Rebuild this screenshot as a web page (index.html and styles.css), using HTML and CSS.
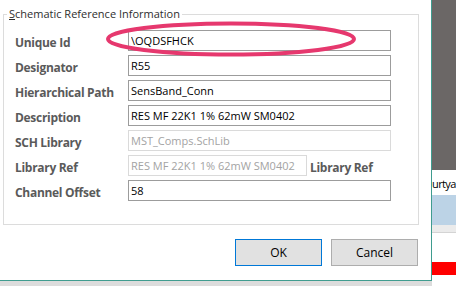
FILE: index.html
```html
<!DOCTYPE html>
<html lang="en">
<head>
  <meta charset="UTF-8">
  <title>Component Properties</title>
  <link rel="stylesheet" href="styles.css">
</head>
<body>

  <div class="screen">
    <div class="left">
      <div class="dialog">
        <div class="group">
          <span class="group-title"><u>S</u>chematic Reference Information</span>

          <div class="row">
            <label>Unique Id</label>
            <input type="text" class="field" value="\OQDSFHCK" readonly>
          </div>
          <div class="row">
            <label>Designator</label>
            <input type="text" class="field" value="R55" readonly>
          </div>
          <div class="row">
            <label>Hierarchical Path</label>
            <input type="text" class="field" value="SensBand_Conn" readonly>
          </div>
          <div class="row">
            <label>Description</label>
            <input type="text" class="field" value="RES MF 22K1 1% 62mW SM0402" readonly>
          </div>
          <div class="row">
            <label>SCH Library</label>
            <input type="text" class="field off" value="MST_Comps.SchLib" readonly>
          </div>
          <div class="row">
            <label>Library Ref</label>
            <input type="text" class="field off short" value="RES MF 22K1 1% 62mW SM0402" readonly>
            <label class="after">Library Ref</label>
          </div>
          <div class="row">
            <label>Channel Offset</label>
            <input type="text" class="field" value="58" readonly>
          </div>
        </div>

        <div class="buttons">
          <button class="ok">OK</button>
          <button>Cancel</button>
        </div>

        <!-- hand drawn mark around the unique id -->
        <svg class="mark" width="262" height="44" viewBox="0 0 262 44">
          <ellipse cx="129" cy="21" rx="123" ry="15.5" fill="none" stroke="#e6386e" stroke-width="4"/>
        </svg>
      </div>
      <div class="under"></div>
    </div>

    <div class="side">
      <div class="side-dark"></div>
      <div class="side-text">urtya</div>
      <div class="side-blue"></div>
      <div class="side-line"></div>
      <div class="side-white"></div>
      <div class="side-red"></div>
    </div>
  </div>

</body>
</html>
```

FILE: styles.css
```css
body {
  margin: 0;
  font-family: 'Open Sans', 'Noto Sans', sans-serif;
  background-color: #ffffff;
}

.screen {
  display: flex;
  width: 456px;
  height: 286px;
  overflow: hidden;
}

.left {
  width: 432px;
  display: flex;
  flex-direction: column;
}

.dialog {
  position: relative;
  width: 431px;
  height: 280px;
  background-color: #ffffff;
  border-right: 1px solid #3f9c8f;
  border-bottom: 1px solid #3f9c8f;
}

.under {
  flex: 1;
  background-color: #dcdcdc;
}

.group {
  position: relative;
  margin: 14px 0 0 3px;
  width: 377px;
  padding: 15px 26px 23px 11px;
  border: 1px solid #dcdcdc;
  display: flex;
  flex-direction: column;
  gap: 4px;
}

.group-title {
  position: absolute;
  top: -9px;
  left: 3px;
  padding: 0 2px;
  background-color: #ffffff;
  font-size: 11px;
  line-height: 16px;
  color: #2e2e2e;
}

.row {
  display: flex;
  align-items: center;
  height: 21px;
}

.row label {
  width: 113px;
  flex-shrink: 0;
  padding-top: 3px;
  font-size: 12px;
  font-weight: 700;
  letter-spacing: -0.3px;
  color: #5a5a5a;
  white-space: nowrap;
}

.row label.after {
  width: auto;
  margin-left: 3px;
}

.field {
  box-sizing: border-box;
  width: 263px;
  height: 21px;
  margin: 0;
  padding: 0 2px;
  border: 1px solid #9c9c9c;
  font-family: 'Open Sans', 'Noto Sans', sans-serif;
  font-size: 11px;
  color: #000000;
  background-color: #ffffff;
  outline: none;
}

.field.off {
  border-color: #dadada;
  color: #a3a3a3;
}

.field.short {
  width: 179px;
}

.buttons {
  display: flex;
  justify-content: flex-end;
  gap: 9px;
  margin-top: 14px;
  padding-right: 13px;
}

.buttons button {
  width: 87px;
  height: 27px;
  border: 1px solid #adadad;
  background-color: #e1e1e1;
  font-family: 'Open Sans', 'Noto Sans', sans-serif;
  font-size: 12px;
  color: #000000;
  padding: 0;
}

.buttons button.ok {
  border-color: #0078d7;
}

.mark {
  position: absolute;
  left: 102px;
  top: 18px;
}

.side {
  width: 24px;
  display: flex;
  flex-direction: column;
  background-color: #ffffff;
}

.side-dark {
  height: 170px;
  background-color: #6b6766;
}

.side-text {
  height: 25px;
  font-size: 11px;
  letter-spacing: -0.6px;
  line-height: 27px;
  color: #000000;
  white-space: nowrap;
  overflow: hidden;
}

.side-blue {
  height: 30px;
  background-color: #bcd3e6;
}

.side-line {
  height: 7px;
  background-color: #ebebeb;
  border-bottom: 1px solid #d4d4d4;
}

.side-white {
  height: 29px;
}

.side-red {
  height: 13px;
  background-color: #ff0000;
}
```
